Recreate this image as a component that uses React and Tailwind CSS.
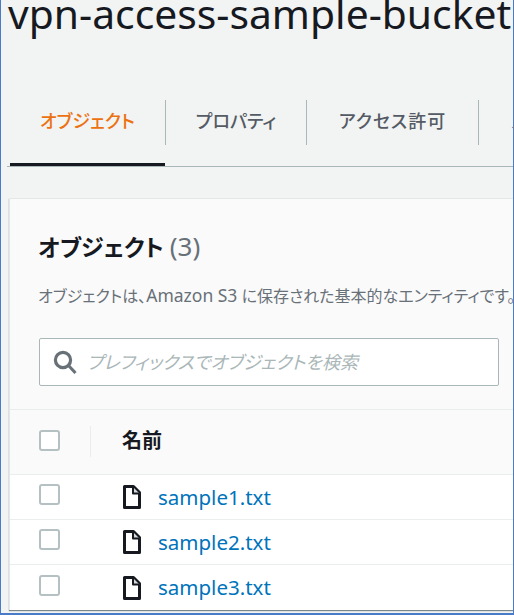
const font = "font-['Noto_Sans','Noto_Sans_CJK_JP',sans-serif] [font-feature-settings:'palt']";

const Checkbox = ({ className }) => (
  <div className={`w-[21px] h-[21px] rounded-[3px] border-2 border-[#b4c0c1] bg-white ${className || ""}`} />
);

const FileIcon = () => (
  <svg width="18" height="24" viewBox="0 0 18 24" fill="none" stroke="#16191f" strokeWidth="3" strokeLinejoin="round">
    <path d="M1.5 1.5h9l6 6v15h-15z" />
    <path d="M10 2v6.5h6.5" strokeWidth="2" fill="#d5dbdb" />
  </svg>
);

const SearchIcon = () => (
  <svg width="24" height="24" viewBox="0 0 24 24" fill="none" stroke="#687078" strokeWidth="3.2">
    <circle cx="10" cy="10" r="7.6" />
    <path d="M15.5 15.5 22.5 23" strokeWidth="3" />
  </svg>
);

const Tab = ({ label, active, width, className }) => (
  <div className={`flex items-center justify-center shrink-0 h-[45px] pb-[2px] ${width}`}>
    <span className={`text-[18px] font-medium whitespace-nowrap ${active ? "text-[#ec7211]" : "text-[#545b64]"} ${className || ""}`}>{label}</span>
  </div>
);

const files = ["sample1.txt", "sample2.txt", "sample3.txt"];

export default function App() {
  return (
    <div className={`w-[514px] h-[615px] overflow-hidden bg-[#f2f3f3] border-l border-r border-b-2 border-[#4a7bc8] flex flex-col ${font}`}>
      <h1 className="text-[40.8px] leading-[48px] h-[48px] pl-[7px] -mt-[11px] whitespace-nowrap text-[#16191f] font-normal">
        vpn-access-sample-bucket
      </h1>

      {/* Tabs */}
      <div className="ml-[6px] mt-[63px] h-[67px] border-b border-[#aab7b8] flex items-start overflow-hidden">
        <div className="h-[66px] ml-[3px] w-[155px] shrink-0 border-b-[3px] border-[#16191f]">
          <Tab label="オブジェクト" active width="w-[155px]" />
        </div>
        <div className="w-px h-[45px] shrink-0 bg-[#aab7b8]" />
        <Tab label="プロパティ" width="w-[140px]" />
        <div className="w-px h-[45px] shrink-0 bg-[#aab7b8]" />
        <Tab label="アクセス許可" width="w-[171px]" className="tracking-[1px]" />
        <div className="w-px h-[45px] shrink-0 bg-[#aab7b8]" />
        <div className="h-[45px] pb-[2px] ml-[32px] flex items-center shrink-0 whitespace-nowrap text-[18px] font-medium text-[#545b64]">メトリクス</div>
      </div>

      {/* Objects card */}
      <div className="ml-[8px] mt-[31px] mb-[3px] flex-1 bg-[#fafafa] border-l border-t border-[#e4e7e7] shadow-[0_1px_1px_rgba(0,28,36,0.5)] flex flex-col min-h-0">
        <div className="px-[29px] pt-[29px] h-[211px] border-b border-[#eaeded] overflow-hidden">
          <div className="-ml-px text-[23px] leading-[36px] font-semibold text-[#16191f] whitespace-nowrap">
            オブジェクト <span className="font-normal text-[26px] text-[#687078]">(3)</span>
          </div>
          <p className="-ml-px mt-[18px] text-[16px] leading-[24px] text-[#687078] whitespace-nowrap">
            オブジェクトは、<span className="text-[17.5px]">Amazon S3</span> に保存された基本的なエンティティです。
          </p>
          <div className="mt-[30px] h-[48px] w-[460px] bg-white border border-[#aab7b8] rounded-[2px] flex items-center pl-[13px]">
            <SearchIcon />
            <span className="ml-[10px] text-[18px] italic text-[#aab7b8] whitespace-nowrap">プレフィックスでオブジェクトを検索</span>
          </div>
        </div>

        <div className="h-[65px] border-b border-[#eaeded] flex items-center pl-[29px] pb-[2px]">
          <Checkbox className="-mt-[2px]" />
          <div className="ml-[30px] w-px h-[31px] bg-[#eaeded]" />
          <span className="ml-[31px] text-[20px] font-semibold text-[#16191f]">名前</span>
        </div>

        {files.map((name, i) => (
          <div key={name} className={`h-[45px] bg-white flex items-center pl-[29px] ${i < 2 ? "border-b border-[#eaeded]" : ""}`}>
            <Checkbox className="-mt-[5px]" />
            <div className="ml-[63px] flex"><FileIcon /></div>
            <span className="ml-[17px] text-[20.5px] text-[#0073bb]">{name}</span>
          </div>
        ))}
      </div>
    </div>
  );
}
